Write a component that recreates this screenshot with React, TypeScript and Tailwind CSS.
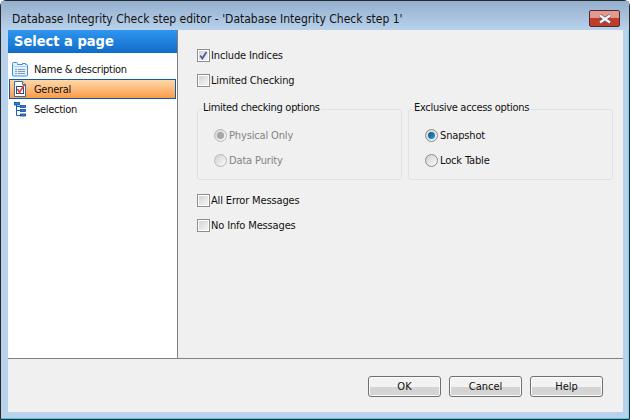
import type { ReactNode } from "react";

const FONT = "font-['DejaVu_Sans_Condensed','DejaVu_Sans',sans-serif]";

function NameIcon() {
  return (
    <svg width="16" height="15" viewBox="0 0 16 15">
      <path d="M0.5 1.5a1 1 0 0 1 1-1h3a1 1 0 0 1 1 1v1h5v-1h3v1h1a1 1 0 0 1 1 1v9.5a1 1 0 0 1-1 1h-13a1 1 0 0 1-1-1z" fill="#e6f1fc" stroke="#3a8ee0" />
      <path d="M1.5 4.5h13" stroke="#a9d0f4" />
      <path d="M6 7.5h7M6 9.5h7M6 11.5h7" stroke="#8796a8" />
      <path d="M3 7.5h2M3 9.5h2M3 11.5h2" stroke="#6ba6e0" />
    </svg>
  );
}

function GeneralIcon() {
  return (
    <svg width="16" height="16" viewBox="0 0 16 16">
      <path d="M2.5 0.5h8l3 3v12h-11z" fill="#fff" stroke="#3a6cb0" />
      <path d="M10.5 0.5v3h3" fill="#cfe2f6" stroke="#3a6cb0" />
      <rect x="4.5" y="5.5" width="7" height="7" fill="#fff" stroke="#1f4f8f" />
      <path d="M5.5 8l2 3.5 5-8" fill="none" stroke="#e8401c" strokeWidth="1.6" />
    </svg>
  );
}

function SelectionIcon() {
  return (
    <svg width="16" height="15" viewBox="0 0 16 15">
      <path d="M4.5 3v10.5h4M4.5 8.5h4M4.5 4.5h4" fill="none" stroke="#1d5fb4" />
      <rect x="2.5" y="0.5" width="5" height="2.5" fill="#2b7de0" stroke="#134a9a" strokeWidth="0.8" />
      <rect x="8.5" y="3.5" width="5" height="2" fill="#2b7de0" stroke="#134a9a" strokeWidth="0.8" />
      <rect x="8.5" y="7.5" width="5" height="2" fill="#2b7de0" stroke="#134a9a" strokeWidth="0.8" />
      <rect x="8.5" y="12" width="5" height="2" fill="#2b7de0" stroke="#134a9a" strokeWidth="0.8" />
    </svg>
  );
}

function Check({ label, checked = false }: { label: string; checked?: boolean }) {
  return (
    <div className="flex h-[13px] items-center gap-[1px] text-[11px] tracking-[-0.15px] text-[#101010]">
      <span className="flex h-[13px] w-[13px] items-center justify-center border border-[#8e8e8e] bg-white p-[1px]">
        <span className="flex h-full w-full items-center justify-center bg-gradient-to-br from-[#d4d4d4] to-[#f4f4f4]">
          {checked && (
            <svg width="9" height="9" viewBox="0 0 9 9">
              <path d="M1.2 4.5l2.2 3 4-6.5" fill="none" stroke="#47589e" strokeWidth="1.7" />
            </svg>
          )}
        </span>
      </span>
      <span className="pt-[2px]">{label}</span>
    </div>
  );
}

function Radio({ label, state }: { label: string; state: "on" | "off" | "dimOn" | "dimOff" }) {
  const dim = state === "dimOn" || state === "dimOff";
  return (
    <div className={`flex h-[13px] items-center gap-[2px] text-[11px] tracking-[-0.15px] ${dim ? "text-[#838383]" : "text-[#101010]"}`}>
      <span
        className={`flex h-[13px] w-[13px] items-center justify-center rounded-full border ${
          dim ? "border-[#b8b8b8]" : "border-[#8a8a8a]"
        } bg-gradient-to-br from-[#d2d2d2] to-[#fafafa]`}
      >
        {state === "on" && <span className="h-[7px] w-[7px] rounded-full bg-gradient-to-br from-[#0a4f7a] to-[#2ba0dc]" />}
        {state === "dimOn" && <span className="h-[7px] w-[7px] rounded-full bg-[#a6a6a6]" />}
      </span>
      <span className="pt-[1px]">{label}</span>
    </div>
  );
}

function Group({ title, children }: { title: string; children: ReactNode }) {
  return (
    <div className="relative h-[71px] w-[205px] rounded-[3px] border border-[#dce2e8] px-[16px] pt-[19px]">
      <span className="absolute left-[4px] top-[-9px] bg-[#f0f0f0] px-[1px] text-[11px] leading-[14px] tracking-[-0.3px] text-[#101010]">{title}</span>
      <div className="flex flex-col gap-[12px]">{children}</div>
    </div>
  );
}

function DialogButton({ label }: { label: string }) {
  return (
    <button className="h-[21px] w-[73px] rounded-[3px] border border-[#707070] bg-gradient-to-b from-[#f2f2f2] from-50% to-[#d4d4d4] to-50% text-[11px] leading-none text-[#101010] shadow-[inset_0_0_0_1px_#fbfbfb]">
      {label}
    </button>
  );
}

function NavItem({ icon, label, active = false }: { icon: ReactNode; label: string; active?: boolean }) {
  return (
    <div
      className={`flex h-[20px] items-center text-[11px] tracking-[-0.3px] text-[#101010] ${
        active ? "border border-[#0a5bb0] bg-gradient-to-b from-[#fdd9a8] to-[#fb9a48]" : "border border-transparent"
      }`}
    >
      <span className="flex w-[24px] shrink-0 pl-[2px]">{icon}</span>
      <span className="pt-[2px]">{label}</span>
    </div>
  );
}

export default function App() {
  return (
    <div className={`h-[420px] w-[630px] overflow-hidden bg-white ${FONT}`}>
      <div className="flex h-full flex-col rounded-t-[6px] border border-[#2a2a2a] bg-[#b9d2ec] shadow-[inset_0_-1px_0_#2fd0f0,inset_-1px_0_0_#6fd8f0]">
        <div className="flex h-[29px] shrink-0 items-start justify-between bg-gradient-to-b from-[#94afcd] to-[#b9d2ec] pl-[11px] pr-[9px] pt-[9px]">
          <span className="text-[12px] leading-[18px] text-[#111]">Database Integrity Check step editor - 'Database Integrity Check step 1'</span>
          <span className="flex h-[17px] w-[31px] items-center justify-center rounded-[2px] border border-[#4f2a35] bg-gradient-to-b from-[#e29a90] from-50% to-[#bf3c26] to-50%">
            <svg width="14" height="10" viewBox="0 0 14 10">
              <path d="M2 1.5l10 7M12 1.5l-10 7" stroke="#5a5a70" strokeWidth="3.6" />
              <path d="M2 1.5l10 7M12 1.5l-10 7" stroke="#f4f6fb" strokeWidth="2.2" />
            </svg>
          </span>
        </div>
        <div className="ml-[7px] mr-[6px] flex min-h-0 flex-1 flex-col bg-[#f0f0f0]">
          <div className="flex min-h-0 flex-1 border-b border-[#808080]">
            <aside className="flex w-[170px] shrink-0 flex-col border-r border-[#808080] bg-white">
              <div className="flex h-[23px] shrink-0 items-center bg-gradient-to-b from-[#2f96f0] to-[#0f6cc8] pl-[6px] text-[14.5px] font-bold text-white">
                Select a page
              </div>
              <nav className="mt-[6px] flex flex-col pl-[1px] pr-[1px]">
                <NavItem icon={<NameIcon />} label="Name & description" />
                <NavItem icon={<GeneralIcon />} label="General" active />
                <NavItem icon={<SelectionIcon />} label="Selection" />
              </nav>
            </aside>
            <main className="flex-1 pl-[19px] pt-[19px]">
              <div className="flex flex-col gap-[12px]">
                <Check label="Include Indices" checked />
                <Check label="Limited Checking" />
              </div>
              <div className="mt-[22px] flex gap-[6px]">
                <Group title="Limited checking options">
                  <Radio label="Physical Only" state="dimOn" />
                  <Radio label="Data Purity" state="dimOff" />
                </Group>
                <Group title="Exclusive access options">
                  <Radio label="Snapshot" state="on" />
                  <Radio label="Lock Table" state="off" />
                </Group>
              </div>
              <div className="mt-[14px] flex flex-col gap-[12px]">
                <Check label="All Error Messages" />
                <Check label="No Info Messages" />
              </div>
            </main>
          </div>
          <div className="flex h-[53px] shrink-0 items-start justify-end gap-[8px] pr-[20px] pt-[17px]">
            <DialogButton label="OK" />
            <DialogButton label="Cancel" />
            <DialogButton label="Help" />
          </div>
        </div>
        <div className="h-[7px] shrink-0" />
      </div>
    </div>
  );
}
